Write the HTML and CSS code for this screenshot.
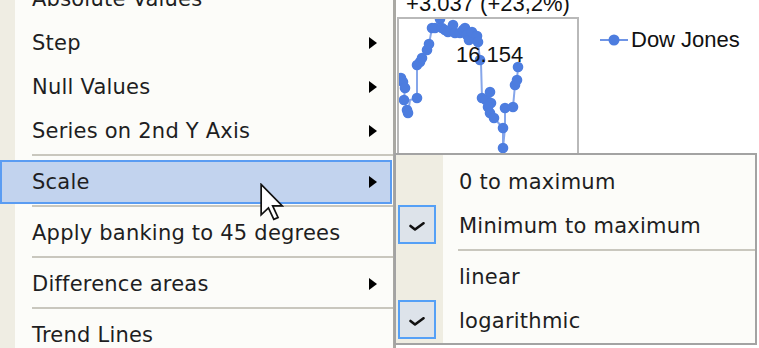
FILE: index.html
```html
<!DOCTYPE html>
<html>
<head>
<meta charset="utf-8">
<link rel="stylesheet" href="styles.css">
</head>
<body>
<div class="screen">
  <div class="menu">
    <div class="item first">Absolute Values</div>
    <div class="item">Step<span class="arrow"></span></div>
    <div class="item">Null Values<span class="arrow"></span></div>
    <div class="item">Series on 2nd Y Axis<span class="arrow"></span></div>
    <div class="sep"></div>
    <div class="item active">Scale<span class="arrow"></span></div>
    <div class="sep"></div>
    <div class="item">Apply banking to 45 degrees</div>
    <div class="sep"></div>
    <div class="item">Difference areas<span class="arrow"></span></div>
    <div class="sep"></div>
    <div class="item">Trend Lines</div>
  </div>
  <div class="chart">
    <div class="plotcol">
      <div class="ctitle">+3.037 (+23,2%)</div>
      <div class="plot">
        <svg width="178" height="150" viewBox="399 19 178 150">
          <polyline class="series" points="399,74 401,78 403,82 405,88 404,100 408,113 410,100 417,98 417,65 420,62 422,58 427,50 429,44 432,28 435,28 440,19 442,28 445,30 448,32 453,25 455,33 460,33 463,30 465,28 467,35 469,40 472,32 477,36 478,42 480,60 481,63 482,98 486,100 490,92 491,103 488,107 490,113 494,118 503,128 503,148 505,128 505,108 513,107 515,85 517,80 518,67"/>
          <g class="dots">
            <circle cx="401" cy="78" r="5.3"/><circle cx="403" cy="82" r="5.3"/><circle cx="405" cy="88" r="5.3"/><circle cx="404" cy="100" r="5.3"/><circle cx="408" cy="113" r="5.3"/><circle cx="407" cy="110" r="5.3"/>
            <circle cx="417" cy="98" r="5.3"/><circle cx="417" cy="65" r="5.3"/><circle cx="420" cy="62" r="5.3"/><circle cx="422" cy="58" r="5.3"/><circle cx="427" cy="50" r="5.3"/><circle cx="429" cy="44" r="5.3"/>
            <circle cx="432" cy="28" r="5.3"/><circle cx="435" cy="28" r="5.3"/><circle cx="440" cy="19" r="5.3"/><circle cx="442" cy="28" r="5.3"/><circle cx="445" cy="30" r="5.3"/><circle cx="448" cy="32" r="5.3"/>
            <circle cx="453" cy="25" r="5.3"/><circle cx="455" cy="33" r="5.3"/><circle cx="460" cy="33" r="5.3"/><circle cx="463" cy="30" r="5.3"/><circle cx="465" cy="28" r="5.3"/><circle cx="467" cy="35" r="5.3"/>
            <circle cx="469" cy="40" r="5.3"/><circle cx="472" cy="32" r="5.3"/><circle cx="477" cy="36" r="5.3"/><circle cx="478" cy="42" r="5.3"/><circle cx="480" cy="60" r="5.3"/>
            <circle cx="482" cy="98" r="5.3"/><circle cx="486" cy="100" r="5.3"/><circle cx="490" cy="92" r="5.3"/><circle cx="491" cy="103" r="5.3"/><circle cx="488" cy="107" r="5.3"/><circle cx="490" cy="113" r="5.3"/>
            <circle cx="494" cy="118" r="5.3"/><circle cx="503" cy="128" r="5.3"/><circle cx="503" cy="148" r="5.3"/><circle cx="505" cy="108" r="5.3"/><circle cx="513" cy="107" r="5.3"/>
            <circle cx="515" cy="85" r="5.3"/><circle cx="517" cy="80" r="5.3"/><circle cx="518" cy="67" r="5.3"/>
          </g>
          <text x="456" y="62" class="label">16.154</text>
        </svg>
      </div>
    </div>
    <div class="legend">
      <svg width="28" height="12" viewBox="0 0 28 12"><line x1="0" y1="6" x2="28" y2="6" class="lline"/><circle cx="14" cy="6" r="5.5" class="ldot"/></svg>
      <span class="ltext">Dow Jones</span>
    </div>
  </div>
</div>

<div class="submenu">
  <div class="sitem"><span class="chk"></span><span class="stext">0 to maximum</span></div>
  <div class="sitem"><span class="chk"><span class="box"><svg width="16" height="9" viewBox="0 0 16 9"><polyline points="1.5,4 6,7.5 14.5,1.2" class="tick"/></svg></span></span><span class="stext">Minimum to maximum</span></div>
  <div class="ssep"></div>
  <div class="sitem"><span class="chk"></span><span class="stext">linear</span></div>
  <div class="sitem"><span class="chk"><span class="box"><svg width="16" height="9" viewBox="0 0 16 9"><polyline points="1.5,4 6,7.5 14.5,1.2" class="tick"/></svg></span></span><span class="stext">logarithmic</span></div>
</div>

<svg class="cursor" width="24" height="38" viewBox="0 0 12.5 19.5">
  <polygon points="0.6,0.6 0.6,16.4 4.4,12.8 7.2,18.8 9.4,17.8 6.6,11.8 11.6,11.8" class="cur"/>
</svg>
</body>
</html>
```
FILE: styles.css
```css
html, body {
  margin: 0;
  padding: 0;
  background: #ffffff;
  overflow: hidden;
}

.screen {
  display: flex;
  width: 759px;
  height: 348px;
  overflow: hidden;
}

.menu {
  width: 396px;
  flex: none;
  box-sizing: border-box;
  border-right: 3px solid #a9a8a3;
  background: linear-gradient(to right, #efede3 0, #efede3 15px, #fcfcf9 15px);
  font-family: "DejaVu Sans", Verdana, sans-serif;
  font-size: 21px;
  letter-spacing: 0.22px;
  color: #1e1e22;
  display: flex;
  flex-direction: column;
}

.item {
  height: 44px;
  flex: none;
  display: flex;
  align-items: center;
  padding-left: 32px;
  margin-right: 1px;
  box-sizing: border-box;
  white-space: nowrap;
}

.item.first {
  margin-top: -23px;
}

.item.active {
  background: #c2d3ee;
  border: 2px solid #5a9cf2;
  padding-left: 30px;
}

.arrow {
  margin-left: auto;
  margin-right: 15px;
  width: 0;
  height: 0;
  border-left: 8px solid #000;
  border-top: 6px solid transparent;
  border-bottom: 6px solid transparent;
}

.item.active .arrow {
  margin-right: 13px;
}

.sep {
  flex: none;
  height: 2px;
  margin: 1px 0 4px 32px;
  background: #c9c7be;
}

.chart {
  flex: 1;
  display: flex;
  align-items: flex-start;
  background: #ffffff;
  font-family: "Liberation Sans", Arial, sans-serif;
  font-size: 22px;
  color: #111;
}

.plotcol {
  margin-left: 1px;
  width: 182px;
  flex: none;
}

.ctitle {
  margin-top: -7px;
  height: 24px;
  line-height: 22px;
  text-align: center;
  white-space: nowrap;
}

.plot {
  border: 2px solid #b9b9b9;
  border-bottom: none;
  height: 170px;
}

.plot svg {
  display: block;
}

.series {
  fill: none;
  stroke: #86a6ea;
  stroke-width: 2;
}

.dots circle {
  fill: #4d7ddf;
}

.label {
  font-family: "Liberation Sans", Arial, sans-serif;
  font-size: 22px;
  fill: #111;
}

.legend {
  margin-left: 21px;
  margin-top: 29px;
  display: flex;
  align-items: center;
  height: 22px;
}

.legend svg {
  display: block;
}

.lline {
  stroke: #6f95e6;
  stroke-width: 2;
}

.ldot {
  fill: #4d7ddf;
}

.ltext {
  margin-left: 3px;
  line-height: 22px;
  white-space: nowrap;
}

.submenu {
  position: absolute;
  left: 394px;
  top: 153px;
  width: 363px;
  height: 192px;
  box-sizing: border-box;
  border: 2px solid #a3a3a3;
  padding-top: 5px;
  background: linear-gradient(to right, #efede2 0, #efede2 47px, #fcfcf9 47px);
  font-family: "DejaVu Sans", Verdana, sans-serif;
  font-size: 21px;
  letter-spacing: 0.25px;
  color: #1e1e22;
}

.sitem {
  height: 44px;
  display: flex;
  align-items: center;
  white-space: nowrap;
}

.chk {
  width: 47px;
  height: 44px;
  flex: none;
  display: flex;
  align-items: flex-start;
}

.box {
  margin: 1px 0 0 2px;
  width: 38px;
  height: 39px;
  box-sizing: border-box;
  border: 2px solid #55a0f6;
  background: #dde3ea;
  display: flex;
  align-items: center;
  justify-content: center;
  padding-top: 3px;
}

.box svg {
  display: block;
}

.tick {
  fill: none;
  stroke: #111;
  stroke-width: 2.6;
  stroke-linecap: round;
  stroke-linejoin: round;
}

.stext {
  margin-left: 16px;
}

.ssep {
  height: 2px;
  margin: 1px 0 4px 62px;
  background: #c9c7be;
}

.cursor {
  position: absolute;
  left: 260px;
  top: 183px;
}

.cur {
  fill: #ffffff;
  stroke: #111;
  stroke-width: 0.9;
  stroke-linejoin: miter;
}
```
